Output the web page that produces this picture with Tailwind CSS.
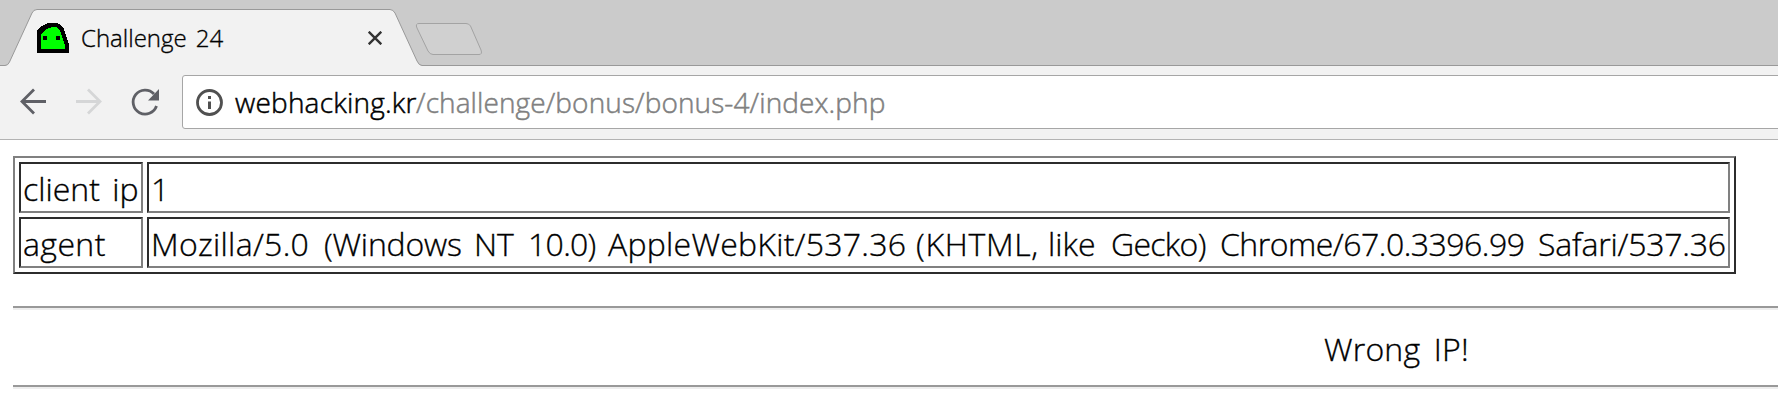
<!DOCTYPE html>
<html lang="en"><head><meta charset="utf-8"><title>Challenge 24</title>
<script src="https://cdn.jsdelivr.net/npm/@tailwindcss/browser@4"></script></head>
<body class="w-[1778px] h-[416px] overflow-hidden bg-white font-['Open_Sans','Noto_Sans',sans-serif] font-light text-black [-webkit-text-stroke:0.35px_currentColor]">
<header class="relative h-[66px] bg-[#cbcbcb]">
<svg class="absolute inset-0" width="1778" height="66" viewBox="0 0 1778 66" fill="none">
<path d="M5 66Q8 65.500 9.500 62L32 13Q33.500 9.500 37 9.500H390Q393 9.500 395 13L417 61Q419 65.500 422 66Z" fill="#f2f2f2"/>
<path d="M0 65.500H5Q8 65.500 9.500 62L32 13Q33.500 9.500 37 9.500H390Q393 9.500 395 13L417 61Q419 65.500 422 65.500H1778" stroke="#999"/>
<path d="M419 23.500H466Q469 23.500 470.500 26L481 50Q482.500 54.500 479 54.500H433Q430 54.500 428 51L417 28Q415 23.500 419 23.500Z" fill="#d0d0d0" stroke="#a3a3a3"/>
</svg>
<div class="relative flex h-full items-center pl-[37px] pt-[9px]">
<svg width="32" height="30" viewBox="0 0 32 30" shape-rendering="crispEdges"><path d="M0 30V8L3 4L7 2L11 0H20L24 2L27 6L29 12L32 21V30Z" fill="#000"/><path d="M4 26V11L7 8L12 5L15 4H19L23 7L26 16L28 23V26Z" fill="#0f0"/><path d="M6 13h4v4H6zM19 13h4v4h-4z" fill="#000"/></svg>
<span class="ml-3 w-[287px] whitespace-nowrap text-[24px] leading-8 [word-spacing:3px]">Challenge 24</span>
<svg width="14" height="14" viewBox="0 0 14 14" stroke="#333" stroke-width="2.400"><path d="M.7.7 13.300 13.300M13.300.7.7 13.300"/></svg>
</div>
</header>
<div class="flex h-[74px] items-start border-b border-[#b3b3b3] bg-[#f2f2f2] pt-[9px]">
<svg class="shrink-0" width="182" height="54" viewBox="0 75 182 54" fill="none" stroke-width="2.800"><path d="M46 101.500H22M34 89.500 22 101.500 34 113.500" stroke="#5f6066"/><path d="M76 101.500H100M88 89.500 100 101.500 88 113.500" stroke="#d5d6d7"/><path d="M154 94A12 12 0 1 0 156.500 106" stroke="#5f6066"/><path d="M159 89V100.500H148Z" fill="#5f6066"/></svg>
<div class="flex h-[54px] w-[1610px] shrink-0 items-center rounded-[3px] border border-[#a6a6a6] bg-white pl-[13px]">
<svg width="27" height="27" viewBox="0 0 27 27" fill="none"><circle cx="13.500" cy="13.500" r="12" stroke="#505050" stroke-width="2.800"/><path d="M12 7h3v3h-3zM12 12.500h3V20h-3z" fill="#505050"/></svg>
<span class="ml-3 flex whitespace-nowrap text-[28px] leading-9 [-webkit-text-stroke:0.5px_currentColor]"><span class="w-[181px] tracking-[0.2px]">webhacking.kr</span><span class="tracking-[0.1px] text-[#808080]">/challenge/bonus/bonus-4/index.php</span></span>
</div></div>
<main class="pl-[13px] pt-4">
<table class="w-[1723px] table-fixed border-separate border-spacing-1 border-2 border-t-[#808080] border-l-[#808080] border-r-[#2c2c2c] border-b-[#2c2c2c] text-[32px]">
<colgroup><col class="w-[124px]"><col></colgroup>
<tr><td class="h-[51px] border-2 border-[#2c2c2c] border-r-[#808080] border-b-[#808080] px-[2px] pt-[2px] pb-0 leading-[45px] whitespace-nowrap [word-spacing:4px]">client ip</td><td class="border-2 border-[#2c2c2c] border-r-[#808080] border-b-[#808080] px-[2px] pt-[2px] pb-0 leading-[45px]">1</td></tr>
<tr><td class="h-[51px] border-2 border-[#2c2c2c] border-r-[#808080] border-b-[#808080] px-[2px] pt-[2px] pb-0 leading-[45px] tracking-[0.4px]">agent</td><td class="border-2 border-[#2c2c2c] border-r-[#808080] border-b-[#808080] px-[2px] pt-[2px] pb-0 leading-[45px]"><div class="flex whitespace-pre"><span class="w-[173px] shrink-0 tracking-[0.3px]">Mozilla/5.0 </span><span class="w-[150px] shrink-0 tracking-[-0.2px]">(Windows </span><span class="w-[54px] shrink-0">NT </span><span class="w-[80px] shrink-0 tracking-[-0.7px]">10.0) </span><span class="w-[308px] shrink-0 tracking-[0.25px]">AppleWebKit/537.36 </span><span class="w-[132px] shrink-0 tracking-[0.7px]">(KHTML, </span><span class="w-[63px] shrink-0">like </span><span class="w-[109px] shrink-0 tracking-[-0.7px]">Gecko) </span><span class="w-[318px] shrink-0 tracking-[-0.5px]">Chrome/67.0.3396.99 </span><span class="shrink-0 tracking-[-0.2px]">Safari/537.36</span></div></td></tr>
</table>
<div class="mt-8 h-1 border-t-2 border-[#999] bg-[#eee]"></div>
<p class="h-[75px] pl-[1311px] text-[32px] leading-[77px] tracking-[0.2px] [word-spacing:5px]">Wrong IP!</p>
<div class="h-1 border-t-2 border-[#999] bg-[#eee]"></div>
</main></body></html>
